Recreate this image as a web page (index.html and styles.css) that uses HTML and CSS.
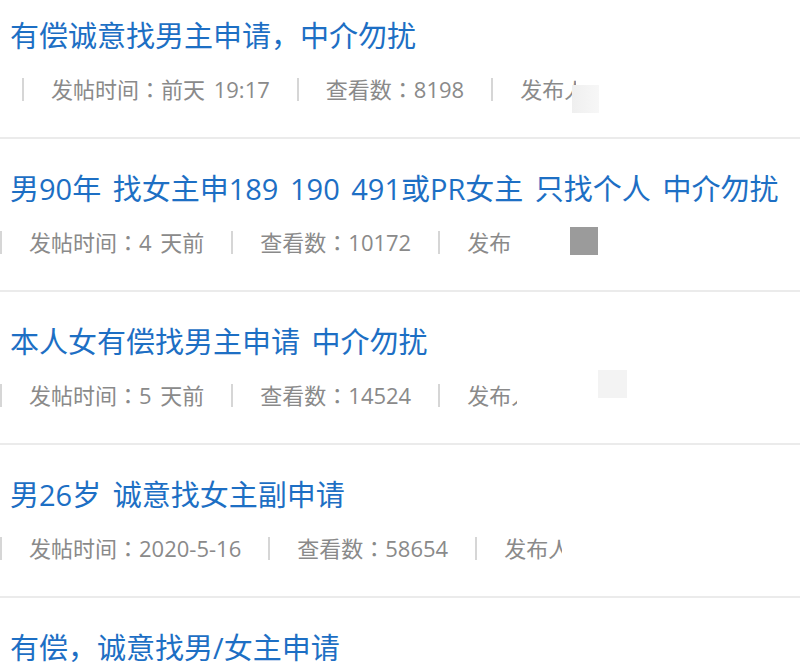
FILE: index.html
```html
<!DOCTYPE html>
<html>
<head>
    <meta charset="utf-8">
    <title>帖子列表</title>
    <link rel="stylesheet" href="styles.css">
</head>
<body>
<ul class="post-list">
    <li class="post post-first">
        <h2 class="post-title">有偿诚意找男主申请，中介勿扰</h2>
        <p class="post-meta">
            <i class="sep"></i><span>发帖时间：前天 19:17</span>
            <i class="sep"></i><span>查看数：8198</span>
            <i class="sep"></i><span class="poster poster-a">发布人</span>
        </p>
        <span class="mask mask-a"></span>
    </li>
    <li class="post">
        <h2 class="post-title">男90年 找女主申189 190 491或PR女主 只找个人 中介勿扰</h2>
        <p class="post-meta">
            <i class="sep"></i><span>发帖时间：4 天前</span>
            <i class="sep"></i><span>查看数：10172</span>
            <i class="sep"></i><span class="poster poster-b">发布人</span>
        </p>
        <span class="mask mask-b"></span>
    </li>
    <li class="post">
        <h2 class="post-title">本人女有偿找男主申请 中介勿扰</h2>
        <p class="post-meta">
            <i class="sep"></i><span>发帖时间：5 天前</span>
            <i class="sep"></i><span>查看数：14524</span>
            <i class="sep"></i><span class="poster poster-c">发布人</span>
        </p>
        <span class="mask mask-c"></span>
    </li>
    <li class="post">
        <h2 class="post-title">男26岁 诚意找女主副申请</h2>
        <p class="post-meta">
            <i class="sep"></i><span>发帖时间：2020-5-16</span>
            <i class="sep"></i><span>查看数：58654</span>
            <i class="sep"></i><span class="poster poster-d">发布人</span>
        </p>
    </li>
    <li class="post">
        <h2 class="post-title">有偿，诚意找男/女主申请</h2>
        <p class="post-meta">
            <i class="sep"></i><span>发帖时间：2020-5-15</span>
            <i class="sep"></i><span>查看数：60213</span>
            <i class="sep"></i><span class="poster">发布人</span>
        </p>
    </li>
</ul>
</body>
</html>
```

FILE: styles.css
```css
html, body {
    overflow: hidden;
}

body, ul, li, h2, p {
    margin: 0;
    padding: 0;
}

body {
    background: #fff;
    font-family: "Open Sans", "Noto Sans CJK SC", sans-serif;
}

.post-list {
    list-style: none;
    margin-top: -14px;
}

.post {
    position: relative;
    padding: 30px 0 33px;
    border-bottom: 2px solid #ebebeb;
}

.post-title {
    padding-left: 10px;
    color: #1d6fc4;
    font-size: 29px;
    font-weight: normal;
    line-height: 40px;
    word-spacing: 4px;
    white-space: nowrap;
}

.post-meta {
    display: flex;
    align-items: center;
    height: 30px;
    margin-top: 18px;
    color: #8a8a8a;
    font-family: "Open Sans", "Noto Sans CJK JP", sans-serif;
    font-size: 22px;
    line-height: 30px;
    word-spacing: 3px;
    white-space: nowrap;
}

.post-first .post-meta {
    padding-left: 22px;
}

.sep {
    display: inline-block;
    width: 2px;
    height: 23px;
    margin: 0 27px;
    background: #d6d6d6;
}

.post-meta .sep:first-child {
    margin-left: 0;
}

.poster {
    display: inline-block;
    overflow: hidden;
}

.poster-a { width: 56px; }
.poster-b { width: 44px; }
.poster-c { width: 50px; }
.poster-d { width: 58px; }

/* 打码块 */
.mask {
    position: absolute;
    width: 27px;
    height: 28px;
}

.mask-a {
    left: 572px;
    top: 99px;
    background: linear-gradient(90deg, #efefef, #f7f7f7);
}

.mask-b {
    left: 570px;
    top: 88px;
    width: 28px;
    background: #9b9b9b;
}

.mask-c {
    left: 598px;
    top: 78px;
    width: 29px;
    background: #f3f3f3;
}
```
